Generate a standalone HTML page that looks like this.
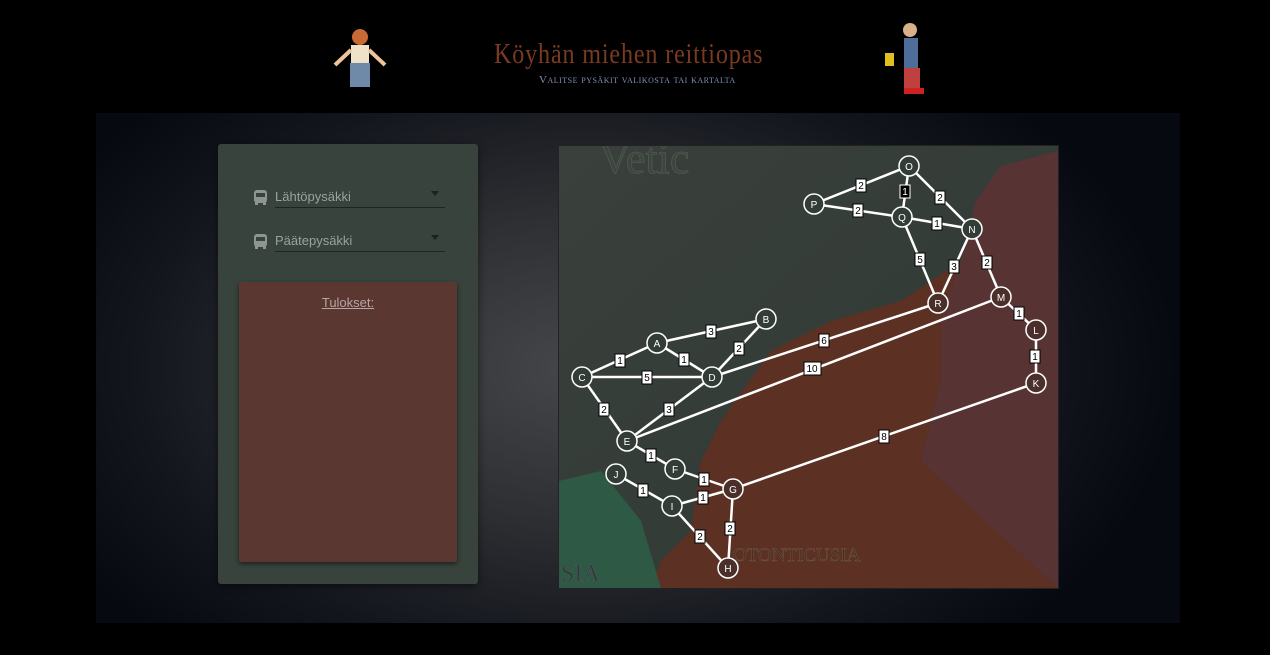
<!DOCTYPE html>
<html><head><meta charset="utf-8"><style>
body{margin:0;width:1270px;height:655px;background:#000;overflow:hidden;font-family:"Liberation Sans",sans-serif;position:relative}
.bgp{position:absolute;left:96px;top:113px;width:1084px;height:510px;background:radial-gradient(ellipse 55% 75% at 45% 50%,#46474a 0%,#2e2f33 40%,#13161d 75%,#060910 100%)}
.title{position:absolute;left:494px;top:39px;font-family:"Liberation Serif",serif;font-size:28px;color:#7a3a22;letter-spacing:1px;transform:scaleX(0.86);transform-origin:left}
.sub{position:absolute;left:539px;top:74px;font-family:"Liberation Serif",serif;font-size:11px;color:#7d8fb0;font-variant:small-caps;letter-spacing:.5px}
.card{position:absolute;left:218px;top:144px;width:260px;height:440px;background:#37433c;border-radius:3px;box-shadow:0 2px 8px rgba(0,0,0,.5)}
.sel{position:absolute;left:57px;width:170px;height:22px;border-bottom:1px solid #1e2420;color:#9aa29c;font-size:13px}
.sel span{position:absolute;left:0;top:4px}
.sel i{position:absolute;right:6px;top:6px;border:4px solid transparent;border-top:5px solid #1d211f}
.bus{position:absolute;left:-21px;top:5px;width:13px;height:15px}
.res{position:absolute;left:21px;top:138px;width:218px;height:280px;background:#5b3732;border-radius:2px;box-shadow:0 2px 5px rgba(0,0,0,.5);text-align:center}
.res u{display:block;margin-top:13px;color:#b5a6a2;font-size:13px}
.map{position:absolute;left:558px;top:145px;width:499px;height:442px;overflow:hidden;border:1px solid #222}
</style></head><body>
<div class="bgp"></div>
<svg style="position:absolute;left:333px;top:25px" width="55" height="66"><circle cx="27" cy="12" r="8" fill="#c96a35"/><rect x="18" y="20" width="18" height="18" fill="#eee2c8"/><path d="M2 40 L18 25 M52 40 L36 25" stroke="#f0c49a" stroke-width="4"/><rect x="17" y="38" width="20" height="24" fill="#6f8aa8"/></svg>
<svg style="position:absolute;left:882px;top:18px" width="50" height="80"><circle cx="28" cy="12" r="7" fill="#d8b08a"/><rect x="22" y="20" width="14" height="30" fill="#4e6d99"/><rect x="3" y="35" width="9" height="13" fill="#e0c020"/><rect x="22" y="50" width="16" height="20" fill="#c04040"/><rect x="22" y="70" width="20" height="6" fill="#c22"/></svg>
<div class="title">Köyhän miehen reittiopas</div>
<div class="sub">Valitse pysäkit valikosta tai kartalta</div>
<div class="card">
 <div class="sel" style="top:41px"><svg class="bus" viewBox="0 0 13 15"><rect x="0" y="0" width="13" height="13" rx="3" fill="#8f9691"/><rect x="2" y="3" width="9" height="4" fill="#37433c"/><rect x="1" y="12" width="3" height="3" fill="#8f9691"/><rect x="9" y="12" width="3" height="3" fill="#8f9691"/></svg><span>Lähtöpysäkki</span><i></i></div>
 <div class="sel" style="top:85px"><svg class="bus" viewBox="0 0 13 15"><rect x="0" y="0" width="13" height="13" rx="3" fill="#8f9691"/><rect x="2" y="3" width="9" height="4" fill="#37433c"/><rect x="1" y="12" width="3" height="3" fill="#8f9691"/><rect x="9" y="12" width="3" height="3" fill="#8f9691"/></svg><span>Päätepysäkki</span><i></i></div>
 <div class="res"><u>Tulokset:</u></div>
</div>
<div class="map">
<svg width="499" height="442" viewBox="558 145 499 442" font-family="Liberation Sans,sans-serif">
<defs><linearGradient id="g" x1="0" y1="0" x2="1" y2="1"><stop offset="0" stop-color="#3a403c"/><stop offset="1" stop-color="#2f3934"/></linearGradient></defs>
<rect x="558" y="145" width="499" height="442" fill="url(#g)"/>
<path d="M1057 150 L1000 165 L975 200 L960 260 L900 300 L830 320 L770 350 L720 420 L700 460 L690 530 L660 560 L650 587 L1057 587Z" fill="#5c3022"/>
<path d="M1057 150 L1000 165 L975 200 L960 260 L940 320 L940 380 L920 460 L1057 587Z" fill="#573433"/>
<path d="M558 480 L600 470 L640 520 L660 587 L558 587Z" fill="#2e5a45"/>
<text x="598" y="172" font-family="Liberation Serif,serif" font-size="44" fill="#3c4640" stroke="#5b5e55" stroke-width=".6">Vetic</text>
<text x="732" y="560" font-family="Liberation Serif,serif" font-size="19" fill="#4b2c20" stroke="#6c5a48" stroke-width=".5">OTONTICUSIA</text>
<text x="560" y="580" font-family="Liberation Serif,serif" font-size="24" fill="#2b3a33" stroke="#556" stroke-width=".5">SIA</text>
<g stroke="#fff" stroke-width="2.5" fill="none">
<path d="M908 165L813 203M908 165L901 216M908 165L971 228M813 203L901 216M901 216L971 228M901 216L937 302M971 228L937 302M971 228L1000 296M1000 296L1035 329L1035 382M937 302L711 376M1000 296L626 440M1035 382L732 488M765 318L656 342M765 318L711 376M656 342L581 376M656 342L711 376M581 376L711 376M581 376L626 440M711 376L626 440M626 440L674 468L732 488M615 473L671 505L732 488M671 505L727 567L732 488"/>
</g>
<g fill="#333d38" stroke="#fff" stroke-width="1.5">
<circle cx="908" cy="165" r="10"/><circle cx="813" cy="203" r="10"/><circle cx="901" cy="216" r="10"/><circle cx="971" cy="228" r="10"/><circle cx="937" cy="302" r="10" fill="#4a2f2a"/><circle cx="1000" cy="296" r="10" fill="#4a2f2a"/><circle cx="1035" cy="329" r="10" fill="#4a2f2a"/><circle cx="1035" cy="382" r="10" fill="#4a2f2a"/><circle cx="765" cy="318" r="10"/><circle cx="656" cy="342" r="10"/><circle cx="581" cy="376" r="10"/><circle cx="711" cy="376" r="10"/><circle cx="626" cy="440" r="10"/><circle cx="674" cy="468" r="10"/><circle cx="615" cy="473" r="10"/><circle cx="732" cy="488" r="10" fill="#4a2f2a"/><circle cx="671" cy="505" r="10"/><circle cx="727" cy="567" r="10" fill="#4a2f2a"/>
</g>
<g fill="#fff" font-size="10" text-anchor="middle">
<text x="908" y="169">O</text><text x="813" y="207">P</text><text x="901" y="220">Q</text><text x="971" y="232">N</text><text x="937" y="306">R</text><text x="1000" y="300">M</text><text x="1035" y="333">L</text><text x="1035" y="386">K</text><text x="765" y="322">B</text><text x="656" y="346">A</text><text x="581" y="380">C</text><text x="711" y="380">D</text><text x="626" y="444">E</text><text x="674" y="472">F</text><text x="615" y="477">J</text><text x="732" y="492">G</text><text x="671" y="509">I</text><text x="727" y="571">H</text>
</g>
<g font-size="10" text-anchor="middle" fill="#000">
<rect x="855" y="178" width="10" height="13" fill="#fff" stroke="#000"/><text x="860" y="188">2</text>
<rect x="899" y="184" width="10" height="13" fill="#000" stroke="#fff"/><text x="904" y="194" fill="#fff">1</text>
<rect x="934" y="190" width="10" height="13" fill="#fff" stroke="#000"/><text x="939" y="200">2</text>
<rect x="852" y="203" width="10" height="13" fill="#fff" stroke="#000"/><text x="857" y="213">2</text>
<rect x="931" y="216" width="10" height="13" fill="#fff" stroke="#000"/><text x="936" y="226">1</text>
<rect x="914" y="252" width="10" height="13" fill="#fff" stroke="#000"/><text x="919" y="262">5</text>
<rect x="948" y="259" width="10" height="13" fill="#fff" stroke="#000"/><text x="953" y="269">3</text>
<rect x="981" y="255" width="10" height="13" fill="#fff" stroke="#000"/><text x="986" y="265">2</text>
<rect x="1013" y="306" width="10" height="13" fill="#fff" stroke="#000"/><text x="1018" y="316">1</text>
<rect x="1029" y="349" width="10" height="13" fill="#fff" stroke="#000"/><text x="1034" y="359">1</text>
<rect x="818" y="333" width="10" height="13" fill="#fff" stroke="#000"/><text x="823" y="343">6</text>
<rect x="803" y="361" width="17" height="13" fill="#fff" stroke="#000"/><text x="811" y="371">10</text>
<rect x="878" y="429" width="10" height="13" fill="#fff" stroke="#000"/><text x="883" y="439">8</text>
<rect x="705" y="324" width="10" height="13" fill="#fff" stroke="#000"/><text x="710" y="334">3</text>
<rect x="733" y="341" width="10" height="13" fill="#fff" stroke="#000"/><text x="738" y="351">2</text>
<rect x="614" y="353" width="10" height="13" fill="#fff" stroke="#000"/><text x="619" y="363">1</text>
<rect x="678" y="352" width="10" height="13" fill="#fff" stroke="#000"/><text x="683" y="362">1</text>
<rect x="641" y="370" width="10" height="13" fill="#fff" stroke="#000"/><text x="646" y="380">5</text>
<rect x="598" y="402" width="10" height="13" fill="#fff" stroke="#000"/><text x="603" y="412">2</text>
<rect x="663" y="402" width="10" height="13" fill="#fff" stroke="#000"/><text x="668" y="412">3</text>
<rect x="645" y="448" width="10" height="13" fill="#fff" stroke="#000"/><text x="650" y="458">1</text>
<rect x="698" y="472" width="10" height="13" fill="#fff" stroke="#000"/><text x="703" y="482">1</text>
<rect x="637" y="483" width="10" height="13" fill="#fff" stroke="#000"/><text x="642" y="493">1</text>
<rect x="697" y="490" width="10" height="13" fill="#fff" stroke="#000"/><text x="702" y="500">1</text>
<rect x="694" y="529" width="10" height="13" fill="#fff" stroke="#000"/><text x="699" y="539">2</text>
<rect x="724" y="521" width="10" height="13" fill="#fff" stroke="#000"/><text x="729" y="531">2</text>
</g>
</svg>
</div>
</body></html>
